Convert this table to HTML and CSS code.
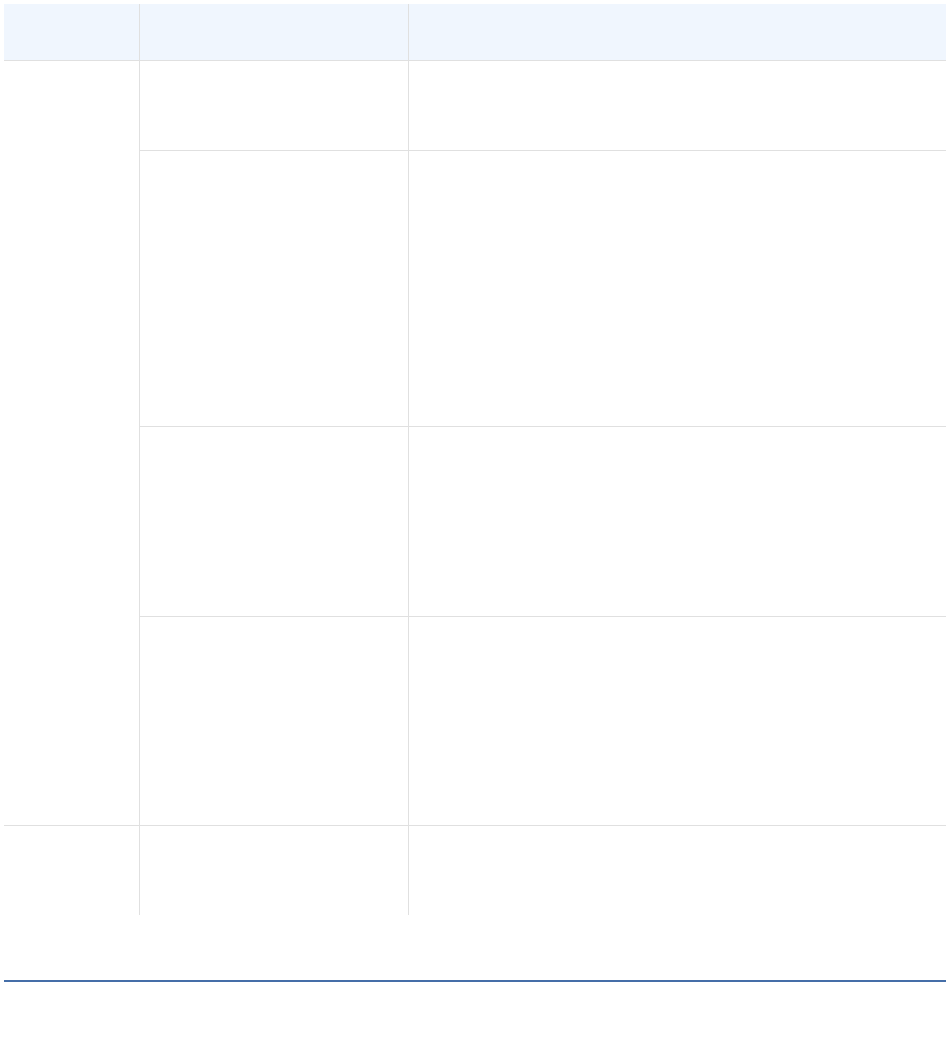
FILE: index.html
```html
<html>
<head>
  <title>Table</title>
  <link rel="stylesheet" href="styles.css">
</head>
<body>

<table class="grid">
  <colgroup>
    <col class="col-a">
    <col class="col-b">
    <col>
  </colgroup>
  <thead>
    <tr class="head-row">
      <th></th>
      <th></th>
      <th></th>
    </tr>
  </thead>
  <tbody>
    <tr class="row-1">
      <td class="group" rowspan="4"></td>
      <td></td>
      <td></td>
    </tr>
    <tr class="row-2">
      <td></td>
      <td></td>
    </tr>
    <tr class="row-3">
      <td></td>
      <td></td>
    </tr>
    <tr class="row-4">
      <td></td>
      <td></td>
    </tr>
    <tr class="row-5 last">
      <td class="group"></td>
      <td></td>
      <td></td>
    </tr>
  </tbody>
</table>

<div class="rule"></div>

</body>
</html>
```

FILE: styles.css
```css
* {
  box-sizing: border-box;
}

body {
  margin: 4px;
  background: #fff;
  font-family: 'Liberation Sans', Arial, sans-serif;
}

.grid {
  width: 100%;
  table-layout: fixed;
  border-collapse: separate;
  border-spacing: 0;
}

.col-a {
  width: 135px;
}

.col-b {
  width: 269px;
}

.grid th,
.grid td {
  padding: 0;
  border-bottom: 1px solid #e0e0e0;
  border-left: 1px solid #e0e0e0;
}

.grid th:first-child,
.grid td.group {
  border-left: none;
}

.grid th {
  background: #f0f6fe;
}

.grid .last td {
  border-bottom: none;
}

.head-row { height: 57px; }
.row-1 { height: 90px; }
.row-2 { height: 276px; }
.row-3 { height: 190px; }
.row-4 { height: 209px; }
.row-5 { height: 89px; }

.rule {
  margin-top: 65px;
  height: 2px;
  background: #456ea8;
}
```
